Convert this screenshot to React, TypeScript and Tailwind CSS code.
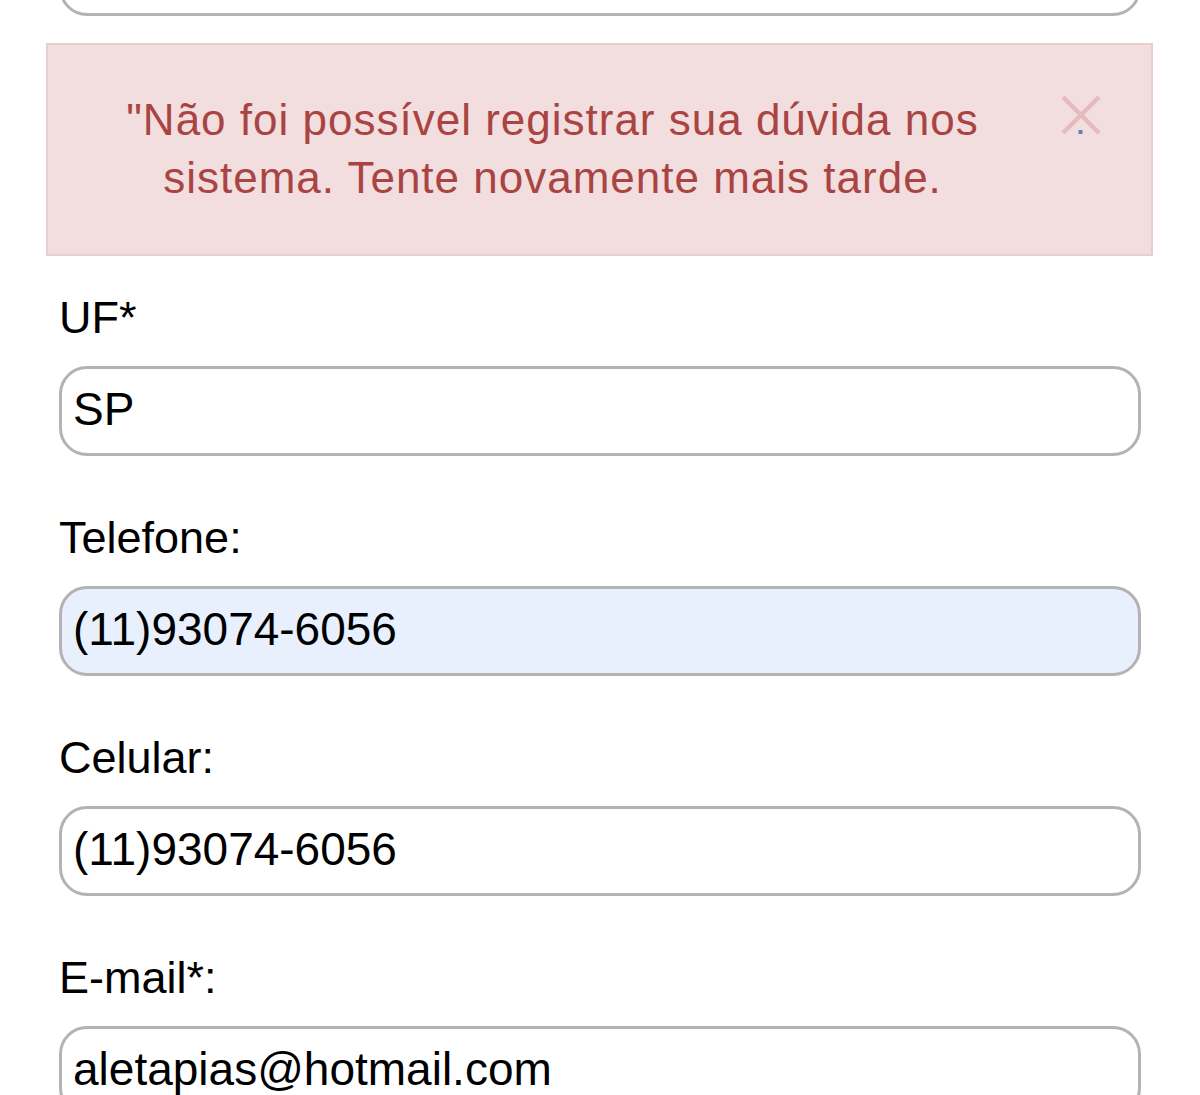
import React from "react";

const fields = [
  { label: "UF*", value: "SP", autofill: false },
  { label: "Telefone:", value: "(11)93074-6056", autofill: true },
  { label: "Celular:", value: "(11)93074-6056", autofill: false },
  { label: "E-mail*:", value: "aletapias@hotmail.com", autofill: false },
];

const inputClass =
  "block w-full h-[90px] shrink-0 rounded-[28px] border-[3px] border-[#b3b3b3] px-[11px] pb-[4px] text-[46px] text-black outline-none";

const App = () => {
  return (
    <div
      className="min-h-screen bg-white px-[59px]"
      style={{ fontFamily: '"Liberation Sans", Arial, Helvetica, sans-serif' }}
    >
      {/* Previous field, scrolled mostly out of view */}
      <div className="h-[16px] overflow-hidden flex flex-col justify-end">
        <input className={`${inputClass} bg-white`} readOnly />
      </div>

      {/* Error alert */}
      <div className="mt-[27px] mb-[37px] -ml-[13px] -mr-[12px] border-2 border-[#ebccd1] bg-[#f2dede] pt-[46px] pb-[47px] pl-[50px] pr-[50px] flex items-start">
        <p className="flex-1 text-center text-[44px] leading-[58px] tracking-[1px] text-[#a94442]">
          "Não foi possível registrar sua dúvida nos sistema. Tente novamente mais tarde.
        </p>
        <div className="w-[94px] flex justify-end">
          <button type="button" aria-label="Fechar" className="mt-[4px]">
            <svg width="40" height="40" viewBox="0 0 40 40" className="block">
              <line x1="2" y1="2" x2="38" y2="38" stroke="#e5bcbd" strokeWidth="4.5" />
              <line x1="38" y1="2" x2="2" y2="38" stroke="#e5bcbd" strokeWidth="4.5" />
              <rect x="17.5" y="35" width="4" height="4" fill="#5b84b8" />
            </svg>
          </button>
        </div>
      </div>

      {/* Form fields */}
      {fields.map((field, index) => (
        <div key={index} className={index > 0 ? "mt-[57px]" : ""}>
          <label className="block text-[45px] leading-[50px] text-black">{field.label}</label>
          <input
            className={`${inputClass} mt-[23px] ${field.autofill ? "bg-[#e8f0fe]" : "bg-white"}`}
            defaultValue={field.value}
            readOnly
          />
        </div>
      ))}
    </div>
  );
};

export default App;
